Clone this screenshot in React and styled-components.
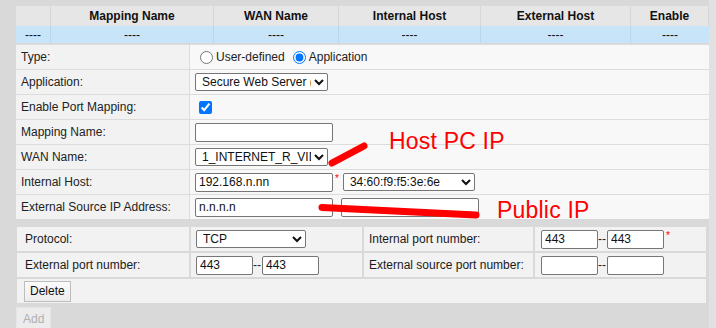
import React from 'react';
import styled, { createGlobalStyle } from 'styled-components';

const GlobalStyle = createGlobalStyle`
  html, body {
    margin: 0;
    padding: 0;
    background: #d9d9d9;
    font-family: "Liberation Sans", Arial, sans-serif;
    font-size: 12px;
    color: #222;
  }
`;

const Page = styled.div`
  position: relative;
  display: flex;
  width: 716px;
  height: 328px;
  overflow: hidden;
  background: #d9d9d9;
`;

const Main = styled.div`
  width: 693px;
  padding: 6px 0 0 16px;
`;

const ScrollStrip = styled.div`
  flex: 1;
  background: #e1e1e1;
`;

// list of existing mappings
const ListGrid = styled.div`
  display: grid;
  grid-template-columns: 35px 163px 125px 142px 150px 78px;
`;

const HeadCell = styled.div`
  height: 20px;
  display: flex;
  align-items: center;
  justify-content: center;
  background: #e6e6e6;
  border-right: 1px solid #d6d6d6;
  font-weight: bold;
  color: #111;
  &:last-child { border-right: none; }
`;

const DataCell = styled.div`
  height: 17px;
  display: flex;
  align-items: center;
  justify-content: center;
  background: #c7e4f9;
  border-right: 1px solid #b9d6ea;
  color: #111;
  &:nth-child(6n) { border-right: none; }
`;

// form
const FormTable = styled.div`
  margin-top: 1px;
`;

const FormRow = styled.div`
  display: grid;
  grid-template-columns: 174px 1fr;
  height: 25px;
  box-sizing: border-box;
  border-top: 1px solid #dcdcdc;
`;

const Label = styled.div`
  display: flex;
  align-items: center;
  padding-left: 5px;
  background: #f2f2f2;
  border-right: 1px solid #dcdcdc;
`;

const Value = styled.div`
  display: flex;
  align-items: center;
  padding-left: 5px;
  background: #f8f8f8;
`;

const Radio = styled.input.attrs({ type: 'radio' })`
  margin: 0 3px 0 5px;
  width: 13px;
  height: 13px;
`;

const RadioText = styled.span`
  margin-right: 3px;
`;

const Check = styled.input.attrs({ type: 'checkbox' })`
  margin: 0 0 0 4px;
  width: 13px;
  height: 13px;
`;

const Select = styled.select`
  width: ${(p) => p.$w}px;
  height: 18px;
  box-sizing: border-box;
  font-family: "Liberation Sans", Arial, sans-serif;
  font-size: 12px;
  color: #111;
  background: #fff;
  border: 1px solid #767676;
  border-radius: 2px;
  padding: 0 0 0 2px;
  margin: 0 0 0 ${(p) => p.$ml || 0}px;
`;

const TextInput = styled.input.attrs({ type: 'text' })`
  width: ${(p) => p.$w}px;
  height: 19px;
  box-sizing: border-box;
  font-family: "Liberation Sans", Arial, sans-serif;
  font-size: 12px;
  color: #111;
  background: #fff;
  border: 1px solid #767676;
  border-radius: 2px;
  padding: 1px 3px;
  margin: 0 0 0 ${(p) => p.$ml || 0}px;
  outline: none;
`;

const Star = styled.span`
  align-self: flex-start;
  margin: 4px 0 0 2px;
  color: #f00;
  font-size: 10px;
  line-height: 10px;
`;

const Dash = styled.span`
  color: #222;
`;

// port table
const PortGrid = styled.div`
  display: grid;
  grid-template-columns: 172px 171px 169px 171px;
  grid-auto-rows: 24px;
  gap: 2px;
  margin: 8px 0 0 1px;
  width: 689px;
`;

const PortCell = styled.div`
  display: flex;
  align-items: center;
  padding-left: ${(p) => p.$pl}px;
  background: #f2f2f2;
  color: #1a1a1a;
  grid-column: ${(p) => (p.$full ? '1 / -1' : 'auto')};
`;

const Button = styled.button`
  font-family: "Liberation Sans", Arial, sans-serif;
  font-size: 12px;
  height: 21px;
  padding: 0 5px;
  border: 1px solid #bdbdbd;
  border-radius: 0;
  background: linear-gradient(#fbfbfb, #ececec);
  color: #111;
`;

const AddButton = styled(Button)`
  margin-top: 4px;
  height: 24px;
  padding: 0 6px;
  color: #b0b0b0;
  border-color: #e6e6e6;
  background: #ececec;
`;

// annotations drawn over the form
const Overlay = styled.svg`
  position: absolute;
  left: 0;
  top: 0;
  pointer-events: none;
`;

const Note = styled.span`
  position: absolute;
  left: ${(p) => p.$x}px;
  top: ${(p) => p.$y}px;
  font-family: "Liberation Sans", Arial, sans-serif;
  font-size: 23px;
  line-height: 23px;
  letter-spacing: 0.2px;
  color: #ff0000;
  white-space: nowrap;
`;

const headers = ['', 'Mapping Name', 'WAN Name', 'Internal Host', 'External Host', 'Enable'];

export default function App() {
  return (
    <>
      <GlobalStyle />
      <Page>
        <Main>
          <ListGrid>
            {headers.map((h, i) => (
              <HeadCell key={i}>{h}</HeadCell>
            ))}
            {headers.map((_, i) => (
              <DataCell key={'d' + i}>----</DataCell>
            ))}
          </ListGrid>

          <FormTable>
            <FormRow>
              <Label>Type:</Label>
              <Value>
                <Radio name="type" />
                <RadioText>User-defined</RadioText>
                <Radio name="type" defaultChecked />
                <RadioText>Application</RadioText>
              </Value>
            </FormRow>
            <FormRow>
              <Label>Application:</Label>
              <Value>
                <Select $w={133} defaultValue="https">
                  <option value="https">Secure Web Server (HTTPS)</option>
                </Select>
              </Value>
            </FormRow>
            <FormRow>
              <Label>Enable Port Mapping:</Label>
              <Value>
                <Check defaultChecked />
              </Value>
            </FormRow>
            <FormRow>
              <Label>Mapping Name:</Label>
              <Value>
                <TextInput $w={138} defaultValue="" />
              </Value>
            </FormRow>
            <FormRow>
              <Label>WAN Name:</Label>
              <Value>
                <Select $w={133} defaultValue="wan">
                  <option value="wan">1_INTERNET_R_VID_100</option>
                </Select>
              </Value>
            </FormRow>
            <FormRow>
              <Label>Internal Host:</Label>
              <Value>
                <TextInput $w={138} defaultValue="192.168.n.nn" />
                <Star>*</Star>
                <Select $w={132} $ml={4} defaultValue="mac">
                  <option value="mac">34:60:f9:f5:3e:6e</option>
                </Select>
              </Value>
            </FormRow>
            <FormRow>
              <Label>External Source IP Address:</Label>
              <Value>
                <TextInput $w={138} defaultValue="n.n.n.n" />
                <TextInput $w={138} $ml={8} defaultValue="" />
              </Value>
            </FormRow>
          </FormTable>

          <PortGrid>
            <PortCell $pl={8}>Protocol:</PortCell>
            <PortCell $pl={5}>
              <Select $w={110} defaultValue="tcp">
                <option value="tcp">TCP</option>
              </Select>
            </PortCell>
            <PortCell $pl={5}>Internal port number:</PortCell>
            <PortCell $pl={6}>
              <TextInput $w={57} defaultValue="443" />
              <Dash>--</Dash>
              <TextInput $w={57} $ml={1} defaultValue="443" />
              <Star>*</Star>
            </PortCell>

            <PortCell $pl={8}>External port number:</PortCell>
            <PortCell $pl={5}>
              <TextInput $w={57} defaultValue="443" />
              <Dash>--</Dash>
              <TextInput $w={57} $ml={1} defaultValue="443" />
            </PortCell>
            <PortCell $pl={5}>External source port number:</PortCell>
            <PortCell $pl={6}>
              <TextInput $w={57} defaultValue="" />
              <Dash>--</Dash>
              <TextInput $w={57} $ml={1} defaultValue="" />
            </PortCell>

            <PortCell $full $pl={7}>
              <Button>Delete</Button>
            </PortCell>
          </PortGrid>

          <AddButton disabled>Add</AddButton>
        </Main>
        <ScrollStrip />

        <Overlay width="716" height="328" viewBox="0 0 716 328">
          <line x1="332" y1="163" x2="364" y2="146" stroke="#ff0000" strokeWidth="7" strokeLinecap="round" />
          <line x1="322" y1="207.5" x2="476" y2="215" stroke="#ff0000" strokeWidth="7" strokeLinecap="round" />
        </Overlay>
        <Note $x={389} $y={130}>Host PC IP</Note>
        <Note $x={497} $y={199}>Public IP</Note>
      </Page>
    </>
  );
}
